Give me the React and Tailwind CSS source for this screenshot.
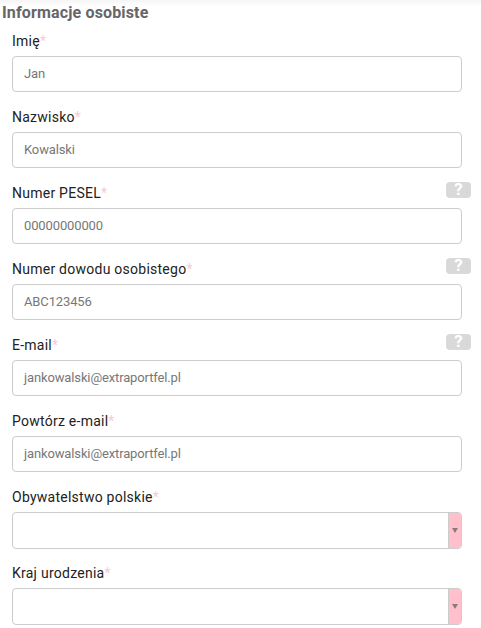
import React from "react";

const fields = [
  { label: "Imię", value: "Jan" },
  { label: "Nazwisko", value: "Kowalski" },
  { label: "Numer PESEL", value: "00000000000", help: true },
  { label: "Numer dowodu osobistego", value: "ABC123456", help: true },
  { label: "E-mail", value: "jankowalski@extraportfel.pl", help: true },
  { label: "Powtórz e-mail", value: "jankowalski@extraportfel.pl" },
  { label: "Obywatelstwo polskie", select: true },
  { label: "Kraj urodzenia", select: true },
];

function Field({ label, value, help, select }) {
  return (
    <div className="relative h-[76px]">
      <label className="block h-[24px] text-[14px] leading-[18px] tracking-[0.25px] text-[#222]">
        {label}
        <span className="text-[#fcc8d6]">*</span>
      </label>
      {help && (
        <span className="absolute right-[10px] top-[-2px] flex h-[16px] w-[25px] items-center justify-center rounded-[4px] bg-[#d9d9d9] text-[17px] font-bold text-white">
          ?
        </span>
      )}
      {select ? (
        <div className="flex h-[37px] w-[450px] overflow-hidden rounded-[4px] border border-[#ccc] bg-white">
          <div className="flex-1" />
          <div className="flex w-[13px] items-center justify-center border-l border-[#ccc] bg-[#ffc0cb]">
            <svg width="6" height="5" viewBox="0 0 6 5">
              <path d="M0 0h6L3 5z" fill="#8a7a80" />
            </svg>
          </div>
        </div>
      ) : (
        <div className="flex h-[36px] w-[450px] items-center rounded-[4px] border border-[#ccc] bg-white px-[11px] text-[13px] tracking-[-0.13px] text-[#777]">
          {value}
        </div>
      )}
    </div>
  );
}

export default function App() {
  return (
    <div className="h-[628px] w-[481px] overflow-hidden bg-white font-['Roboto',sans-serif]">
      <div className="h-[32px] bg-gradient-to-b from-[#f5f5f5] to-white to-[20%] pl-[2px] pt-[2px]">
        <h2 className="text-[16px] font-bold leading-[22px] tracking-[0.15px] text-[#666]">Informacje osobiste</h2>
      </div>
      <div className="pl-[12px]">
        {fields.map((f) => (
          <Field key={f.label} {...f} />
        ))}
      </div>
    </div>
  );
}
